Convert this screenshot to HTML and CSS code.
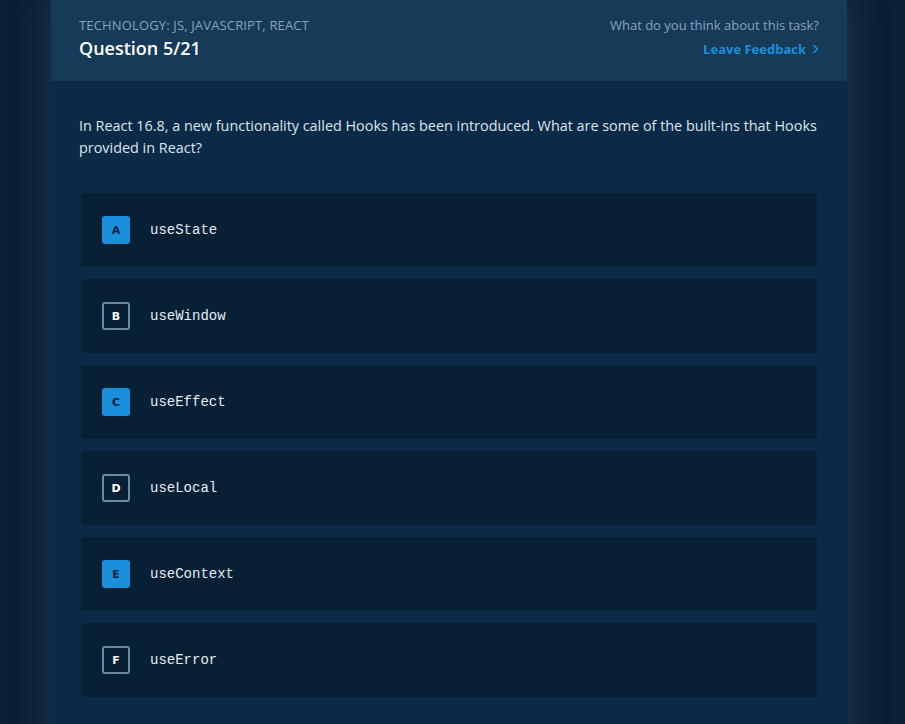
FILE: index.html
```html
<!DOCTYPE html>
<html lang="en">
<head>
<meta charset="utf-8">
<title>Question 5/21</title>
<link rel="stylesheet" href="styles.css">
</head>
<body>
<div class="page">
  <div class="card">
    <header class="card-head">
      <div class="head-left">
        <div class="tech">Technology: JS, JavaScript, React</div>
        <h1 class="qnum">Question 5/21</h1>
      </div>
      <div class="head-right">
        <div class="ask">What do you think about this task?</div>
        <a class="feedback" href="#">Leave Feedback
          <svg class="chev" width="8" height="10" viewBox="0 0 8 10"><path d="M2 1.5 L5.5 5 L2 8.5" fill="none" stroke="currentColor" stroke-width="1.6" stroke-linecap="round" stroke-linejoin="round"/></svg>
        </a>
      </div>
    </header>
    <section class="card-body">
      <p class="question">In React 16.8, a new functionality called Hooks has been introduced. What are some of the built-ins that Hooks provided in React?</p>
      <ul class="options">
        <li class="option"><span class="badge selected">A</span><code class="label">useState</code></li>
        <li class="option"><span class="badge">B</span><code class="label">useWindow</code></li>
        <li class="option"><span class="badge selected">C</span><code class="label">useEffect</code></li>
        <li class="option"><span class="badge">D</span><code class="label">useLocal</code></li>
        <li class="option"><span class="badge selected">E</span><code class="label">useContext</code></li>
        <li class="option"><span class="badge">F</span><code class="label">useError</code></li>
      </ul>
    </section>
  </div>
</div>
</body>
</html>
```

FILE: styles.css
```css
html, body {
  margin: 0;
  padding: 0;
  background: #0a2036;
  height: 100%;
  overflow: hidden;
}
body {
  font-family: "Open Sans", "Noto Sans", sans-serif;
  color: #fff;
}
.page {
  padding: 0 58px 0 51px;
}
.card {
  margin-top: -4px;
  border-radius: 6px;
  background: #0b2a47;
  box-shadow: 0 0 36px 4px rgba(70, 90, 110, 0.35);
  min-height: 760px;
  overflow: hidden;
}
.card-head {
  background: #163a58;
  height: 85px;
  box-sizing: border-box;
  padding: 20px 28px 0 28px;
  display: flex;
  justify-content: space-between;
  align-items: flex-start;
}
.tech {
  font-size: 13px;
  line-height: 18px;
  letter-spacing: 0.15px;
  text-transform: uppercase;
  color: #8aa3b8;
}
.qnum {
  margin: 1px 0 0 0;
  font-size: 18px;
  line-height: 26px;
  font-weight: 600;
  color: #ffffff;
}
.head-right {
  text-align: right;
}
.ask {
  font-size: 13px;
  line-height: 18px;
  color: #8aa3b8;
}
.feedback {
  display: inline-flex;
  align-items: center;
  gap: 6px;
  margin-top: 6px;
  font-size: 13px;
  line-height: 18px;
  font-weight: 700;
  color: #1c8fda;
  text-decoration: none;
}
.chev {
  display: block;
  margin-right: -1px;
}
.card-body {
  padding: 0 28px;
}
.question {
  margin: 0;
  padding-top: 34px;
  font-size: 14.4px;
  line-height: 22px;
  color: #dde5ec;
}
.options {
  list-style: none;
  margin: 34px 2px 0 2px;
  padding: 0;
  display: flex;
  flex-direction: column;
  gap: 12px;
}
.option {
  height: 74px;
  box-sizing: border-box;
  background: #082036;
  border-radius: 4px;
  display: flex;
  align-items: center;
  padding-left: 21px;
}
.badge {
  width: 28px;
  height: 28px;
  box-sizing: border-box;
  border-radius: 3px;
  border: 2px solid #6d8ba3;
  color: #ffffff;
  font-family: "DejaVu Sans", sans-serif;
  font-size: 11px;
  font-weight: 700;
  display: flex;
  align-items: center;
  justify-content: center;
  flex: none;
}
.badge.selected {
  background: #1a90dc;
  border-color: #1a90dc;
  color: #0a2036;
}
.label {
  margin-left: 20px;
  font-family: "Liberation Mono", "DejaVu Sans Mono", monospace;
  font-size: 14px;
  color: #e6ecf1;
}
```
